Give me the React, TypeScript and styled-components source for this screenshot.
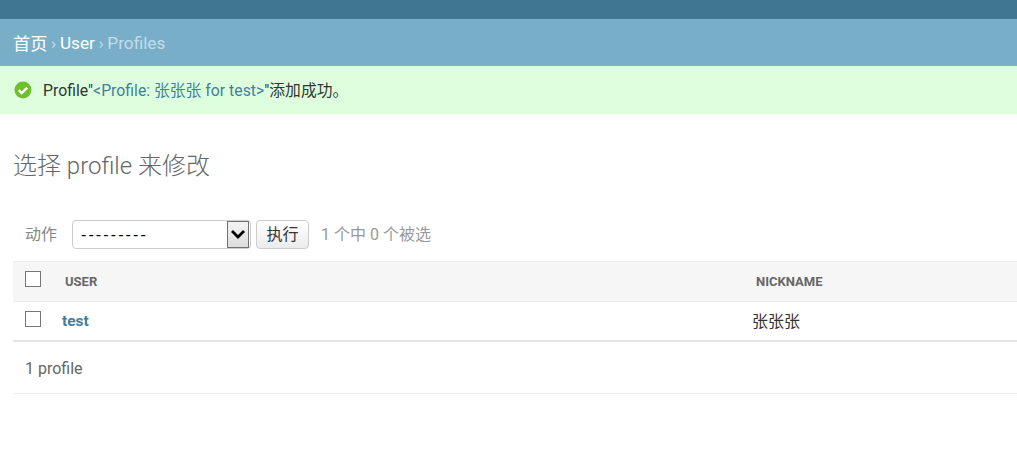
import React from "react";
import styled, { createGlobalStyle } from "styled-components";

const GlobalStyle = createGlobalStyle`
  html, body {
    margin: 0;
    padding: 0;
    background: #fff;
    overflow: hidden;
  }
  body {
    font-family: Roboto, "Noto Sans CJK SC", sans-serif;
    font-size: 16px;
    color: #333;
  }
`;

const Header = styled.div`
  height: 19px;
  background: #417690;
`;

const Breadcrumbs = styled.div`
  display: flex;
  align-items: center;
  height: 47px;
  padding: 0 13px;
  box-sizing: border-box;
  background: #79aec8;
  font-size: 17.2px;
  font-weight: 400;
  word-spacing: -0.6px;
  color: #c4dce8;
  white-space: pre;
`;

const CrumbLink = styled.a`
  color: #fff;
`;

const Message = styled.div`
  display: flex;
  align-items: center;
  height: 48px;
  padding-left: 14px;
  background: #dfd;
  font-size: 15.8px;
  color: #333;
  white-space: pre;
`;

const MessageText = styled.span`
  margin: 0 0 2px 11px;
`;

const MessageLink = styled.a`
  color: #447e9b;
`;

const Content = styled.div`
  padding: 0 0 0 13px;
`;

const Title = styled.h1`
  margin: 0;
  padding: 36px 0 0;
  height: 63px;
  font-size: 24px;
  line-height: 32px;
  font-weight: 300;
  color: #666;
  box-sizing: content-box;
`;

const Actions = styled.div`
  display: flex;
  align-items: center;
  box-sizing: border-box;
  height: 48px;
  padding: 0 0 5px 12px;
  font-size: 16px;
  font-weight: 400;
  color: #999;
`;

const ActionLabel = styled.span`
  color: #888;
  margin: 0 15px 4px 0;
`;

const ActionSelect = styled.div`
  display: flex;
  justify-content: space-between;
  align-items: center;
  box-sizing: border-box;
  width: 179px;
  height: 29px;
  padding: 0 1px 0 8px;
  border: 1px solid #ccc;
  border-radius: 4px;
  background: #fff;
  font-family: "Liberation Sans", sans-serif;
  font-size: 16px;
  letter-spacing: 2.1px;
  color: #000;
`;

const SelectArrow = styled.span`
  display: flex;
  align-items: center;
  justify-content: center;
  box-sizing: border-box;
  width: 22px;
  height: 27px;
  border: 1px solid #707070;
  background: linear-gradient(#f4f4f4, #dcdcdc);
`;

const GoButton = styled.button`
  box-sizing: border-box;
  width: 53px;
  height: 29px;
  margin-left: 5px;
  padding: 0 0 3px;
  border: 1px solid #ccc;
  border-radius: 4px;
  background: linear-gradient(#fff, #ececec);
  font-family: Roboto, "Noto Sans CJK SC", sans-serif;
  font-size: 16px;
  color: #333;
`;

const Counter = styled.span`
  margin: 0 0 4px 12px;
`;

const Table = styled.div`
  display: flex;
  flex-direction: column;
`;

const HeadRow = styled.div`
  display: flex;
  align-items: center;
  box-sizing: border-box;
  height: 41px;
  background: #f6f6f6;
  border-top: 1px solid #eee;
  border-bottom: 1px solid #eee;
`;

const BodyRow = styled.div`
  display: flex;
  align-items: center;
  box-sizing: border-box;
  height: 40px;
  border-bottom: 2px solid #e4e4e4;
`;

const CheckCell = styled.div<{ $lift: number }>`
  display: flex;
  width: 49px;
  padding: 0 0 ${(p) => p.$lift}px 12px;
  box-sizing: border-box;
`;

const CheckBox = styled.span`
  display: block;
  box-sizing: border-box;
  width: 16px;
  height: 16px;
  border: 1px solid #767676;
  background: #fff;
`;

const HeadCell = styled.div<{ $width: number }>`
  width: ${(p) => p.$width}px;
  padding-left: 3px;
  box-sizing: border-box;
  font-size: 13px;
  font-weight: 700;
  color: #666;
  text-transform: uppercase;
`;

const UserCell = styled.a`
  width: 691px;
  font-size: 15.5px;
  font-weight: 700;
  color: #447e9b;
`;

const NickCell = styled.div`
  margin: 0 0 2px -1px;
  font-size: 16px;
  color: #333;
`;

const Paginator = styled.div`
  display: flex;
  align-items: center;
  box-sizing: border-box;
  height: 52px;
  padding: 1px 0 0 12px;
  border-bottom: 1px solid #eee;
  font-size: 16px;
  font-weight: 400;
  color: #666;
`;

export default function App() {
  return (
    <>
      <GlobalStyle />
      <Header />
      <Breadcrumbs>
        <CrumbLink>首页</CrumbLink> › <CrumbLink>User</CrumbLink> › Profiles
      </Breadcrumbs>
      <Message>
        <svg width="18" height="18" viewBox="0 0 18 18">
          <circle cx="9" cy="9" r="8.5" fill="#70bf2b" />
          <path d="M4.8 9.2 7.7 12 13.2 6.6" fill="none" stroke="#fff" strokeWidth="2.4" />
        </svg>
        <MessageText>
          Profile"<MessageLink>&lt;Profile: 张张张 for test&gt;</MessageLink>"添加成功。
        </MessageText>
      </Message>
      <Content>
        <Title>选择 profile 来修改</Title>
        <Actions>
          <ActionLabel>动作</ActionLabel>
          <ActionSelect>
            ---------
            <SelectArrow>
              <svg width="16" height="11" viewBox="0 0 16 11">
                <path d="M2 2 8 8 14 2" fill="none" stroke="#000" strokeWidth="2.8" />
              </svg>
            </SelectArrow>
          </ActionSelect>
          <GoButton>执行</GoButton>
          <Counter>1 个中 0 个被选</Counter>
        </Actions>
        <Table>
          <HeadRow>
            <CheckCell $lift={6}>
              <CheckBox />
            </CheckCell>
            <HeadCell $width={691}>User</HeadCell>
            <HeadCell $width={200}>Nickname</HeadCell>
          </HeadRow>
          <BodyRow>
            <CheckCell $lift={4}>
              <CheckBox />
            </CheckCell>
            <UserCell>test</UserCell>
            <NickCell>张张张</NickCell>
          </BodyRow>
        </Table>
        <Paginator>1 profile</Paginator>
      </Content>
    </>
  );
}
